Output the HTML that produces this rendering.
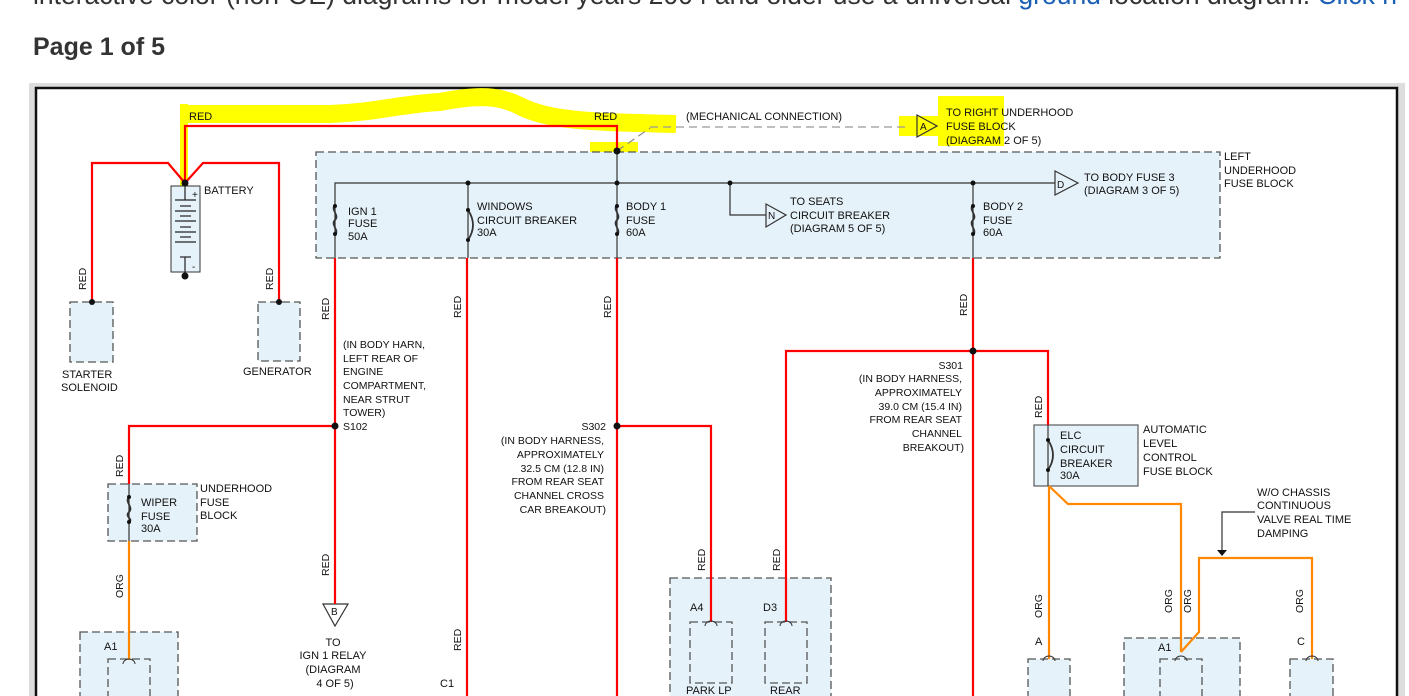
<!DOCTYPE html>
<html><head><meta charset="utf-8"><style>
html,body{margin:0;padding:0;background:#fff;width:1409px;height:696px;overflow:hidden;font-family:"Liberation Sans",sans-serif}
#top{position:absolute;left:33px;top:-20px;font-size:26.5px;color:#333;white-space:nowrap}
#top span{color:#1a5fb4}
#h{position:absolute;left:33px;top:33px;font-size:25px;font-weight:bold;color:#333}
svg{position:absolute;left:0;top:0}
</style></head><body>
<div id="top">interactive color (non-OE) diagrams for model years 2004 and older use a universal <span>ground</span> location diagram. <span>Click h</span></div>
<div id="h">Page 1 of 5</div>
<svg width="1409" height="696" font-family="Liberation Sans, sans-serif" font-size="11" fill="#111">
<rect x="29" y="83" width="1376" height="620" fill="#ddd"/>
<rect x="36" y="88" width="1361" height="620" fill="#fff" stroke="#111" stroke-width="2.5"/>
<!-- yellow highlights -->
<path d="M184 104 L184 200" stroke="#ffff00" stroke-width="8" fill="none"/>
<path d="M180 114 L330 114 C380 112 400 104 440 102 C480 94 500 96 520 106 C550 122 600 122 676 124" stroke="#ffff00" stroke-width="18" fill="none"/>
<rect x="590" y="142" width="48" height="22" fill="#ffff00"/>
<rect x="899" y="116" width="40" height="20" fill="#ffff00"/>
<rect x="938" y="96" width="66" height="50" fill="#ffff00"/>
<!-- fuse blocks -->
<g fill="#e6f2fa" stroke="#555" stroke-dasharray="8,4" stroke-width="1.3">
<rect x="316" y="152" width="904" height="106"/>
<rect x="70" y="302" width="43" height="60"/>
<rect x="258" y="302" width="42" height="59"/>
<rect x="108" y="484" width="89" height="57"/>
<rect x="80" y="632" width="98" height="80"/>
<rect x="108" y="659" width="42" height="50"/>
<rect x="670" y="578" width="161" height="130"/>
<rect x="690" y="622" width="42" height="61"/>
<rect x="765" y="622" width="42" height="61"/>
<rect x="1028" y="659" width="42" height="50"/>
<rect x="1124" y="638" width="116" height="70"/>
<rect x="1160" y="659" width="42" height="50"/>
<rect x="1290" y="659" width="43" height="50"/>
</g>
<rect x="1034" y="425" width="104" height="61" fill="#e6f2fa" stroke="#666" stroke-width="1.3"/>
<rect x="171" y="186" width="29" height="86" fill="#e6f2fa" stroke="#333"/>
<g stroke="#222" stroke-width="1.2">
<line x1="175" y1="200" x2="196" y2="200"/><line x1="180" y1="206" x2="191" y2="206"/>
<line x1="175" y1="211" x2="196" y2="211"/><line x1="180" y1="216" x2="191" y2="216"/>
<line x1="175" y1="221" x2="196" y2="221"/><line x1="180" y1="227" x2="191" y2="227"/>
<line x1="175" y1="232" x2="196" y2="232"/><line x1="180" y1="237" x2="191" y2="237"/>
<line x1="175" y1="242" x2="196" y2="242"/><line x1="180" y1="257" x2="191" y2="257"/>
<line x1="185" y1="257" x2="185" y2="276"/><line x1="185" y1="183" x2="185" y2="200"/>
</g>
<text x="192" y="198" font-size="10">+</text><text x="192" y="270" font-size="10">-</text>
<!-- dark wires in block -->
<g stroke="#333" stroke-width="1.2" fill="none">
<path d="M335 258 L335 183 L1065 183"/>
<path d="M617 151 L617 258"/><path d="M468 183 L468 258"/><path d="M973 183 L973 258"/>
<path d="M730 183 L730 215 L766 215"/>
<path d="M1048 425 L1048 486"/><path d="M129 484 L129 541"/>
<path d="M617 151 L650 128" stroke-dasharray="8,5" stroke="#888"/>
<path d="M650 127 L905 127" stroke-dasharray="8,5" stroke="#999"/>
<path d="M1255 512 L1222 512 L1222 550"/>
</g>
<g stroke="#333" stroke-width="1.8" fill="none">
<path d="M335 205 C330 210 340 215 335 220 C330 225 340 230 335 235"/>
<path d="M617 205 C612 210 622 215 617 220 C612 225 622 230 617 235"/>
<path d="M973 205 C968 210 978 215 973 220 C968 225 978 230 973 235"/>
<path d="M129 497 C124 502 134 507 129 512 C124 517 134 519 129 522"/>
<path d="M468 210 Q478 225 468 240"/><path d="M1048 440 Q1058 455 1048 470"/>
</g>
<g fill="#111"><circle cx="335" cy="206" r="2"/><circle cx="335" cy="234" r="2"/><circle cx="617" cy="206" r="2"/><circle cx="617" cy="234" r="2"/><circle cx="973" cy="206" r="2"/><circle cx="973" cy="234" r="2"/><circle cx="468" cy="210" r="2"/><circle cx="468" cy="240" r="2"/><circle cx="1048" cy="440" r="2"/><circle cx="1048" cy="470" r="2"/><circle cx="129" cy="497" r="2"/><circle cx="129" cy="522" r="2"/></g>
<path d="M1217 550 L1227 550 L1222 556 Z" fill="#111"/>
<g fill="#fff" stroke="#333" stroke-width="1.2">
<path d="M917 115 L937 126 L917 137 Z" fill="#ffff00"/>
<path d="M1055 171 L1078 183 L1055 195 Z" fill="#e6f2fa"/>
<path d="M766 204 L786 215 L766 227 Z" fill="#e6f2fa"/>
<path d="M323 604 L348 604 L335 626 Z"/>
</g>
<g font-size="10"><text x="920" y="130">A</text><text x="1057" y="188">D</text><text x="768" y="219">N</text><text x="331" y="615">B</text></g>
<!-- red wires -->
<g stroke="#f00" stroke-width="2.2" fill="none">
<path d="M185 183 L185 126 L617 126 L617 151"/>
<path d="M185 183 L168 163 L92 163 L92 302"/>
<path d="M185 183 L203 163 L279 163 L279 302"/>
<path d="M335 258 L335 604"/><path d="M467 258 L467 700"/><path d="M617 258 L617 700"/><path d="M973 258 L973 700"/>
<path d="M335 426 L129 426 L129 484"/>
<path d="M617 426 L711 426 L711 622"/>
<path d="M973 351 L786 351 L786 622"/>
<path d="M973 351 L1048 351 L1048 425"/>
</g>
<g stroke="#f80" stroke-width="2.2" fill="none">
<path d="M129 541 L129 660"/>
<path d="M1049 486 L1049 659"/>
<path d="M1049 486 L1068 504 L1181 504 L1181 652"/>
<path d="M1181 652 L1199 632 L1199 558 L1312 558 L1312 659"/>
</g>
<g fill="#111">
<circle cx="617" cy="151" r="3.5"/><circle cx="185" cy="183" r="3.5"/><circle cx="185" cy="276" r="3.5"/>
<circle cx="468" cy="183" r="2.5"/><circle cx="617" cy="183" r="2.5"/><circle cx="730" cy="183" r="2.5"/><circle cx="973" cy="183" r="2.5"/>
<circle cx="335" cy="426" r="3.5"/><circle cx="617" cy="426" r="3.5"/><circle cx="973" cy="351" r="3.5"/>
<circle cx="92" cy="302" r="3"/><circle cx="279" cy="302" r="3"/>
</g>
<!-- text -->
<text x="189" y="120">RED</text><text x="594" y="120">RED</text>
<text x="686" y="120">(MECHANICAL CONNECTION)</text>
<text x="946" y="116">TO RIGHT UNDERHOOD</text><text x="946" y="130">FUSE BLOCK</text><text x="946" y="144">(DIAGRAM 2 OF 5)</text>
<text x="204" y="194">BATTERY</text>
<text x="1224" y="160">LEFT</text><text x="1224" y="174">UNDERHOOD</text><text x="1224" y="187">FUSE BLOCK</text>
<text x="1084" y="181">TO BODY FUSE 3</text><text x="1084" y="194">(DIAGRAM 3 OF 5)</text>
<text x="348" y="215">IGN 1</text><text x="348" y="227">FUSE</text><text x="348" y="240">50A</text>
<text x="477" y="210">WINDOWS</text><text x="477" y="224">CIRCUIT BREAKER</text><text x="477" y="236">30A</text>
<text x="626" y="210">BODY 1</text><text x="626" y="224">FUSE</text><text x="626" y="236">60A</text>
<text x="790" y="205">TO SEATS</text><text x="790" y="219">CIRCUIT BREAKER</text><text x="790" y="232">(DIAGRAM 5 OF 5)</text>
<text x="983" y="210">BODY 2</text><text x="983" y="224">FUSE</text><text x="983" y="236">60A</text>
<text x="62" y="378">STARTER</text><text x="61" y="391">SOLENOID</text><text x="243" y="375">GENERATOR</text>
<g font-size="10.5">
<text x="343" y="348">(IN BODY HARN,</text><text x="343" y="362">LEFT REAR OF</text><text x="343" y="375">ENGINE</text><text x="343" y="389">COMPARTMENT,</text><text x="343" y="403">NEAR STRUT</text><text x="343" y="416">TOWER)</text>
<text x="343" y="430">S102</text>
<g text-anchor="end"><text x="606" y="430">S302</text><text x="604" y="444">(IN BODY HARNESS,</text><text x="604" y="458">APPROXIMATELY</text><text x="604" y="472">32.5 CM (12.8 IN)</text><text x="604" y="485">FROM REAR SEAT</text><text x="604" y="499">CHANNEL CROSS</text><text x="606" y="513">CAR BREAKOUT)</text>
<text x="963" y="369">S301</text><text x="962" y="382">(IN BODY HARNESS,</text><text x="962" y="396">APPROXIMATELY</text><text x="962" y="410">39.0 CM (15.4 IN)</text><text x="962" y="423">FROM REAR SEAT</text><text x="962" y="437">CHANNEL</text><text x="964" y="451">BREAKOUT)</text></g>
</g>
<text x="141" y="506">WIPER</text><text x="141" y="520">FUSE</text><text x="141" y="532">30A</text>
<text x="200" y="492">UNDERHOOD</text><text x="200" y="506">FUSE</text><text x="200" y="519">BLOCK</text>
<text x="1060" y="439">ELC</text><text x="1060" y="453">CIRCUIT</text><text x="1060" y="467">BREAKER</text><text x="1060" y="479">30A</text>
<text x="1143" y="433">AUTOMATIC</text><text x="1143" y="447">LEVEL</text><text x="1143" y="461">CONTROL</text><text x="1143" y="475">FUSE BLOCK</text>
<text x="1257" y="496">W/O CHASSIS</text><text x="1257" y="509">CONTINUOUS</text><text x="1257" y="523">VALVE REAL TIME</text><text x="1257" y="537">DAMPING</text>
<g text-anchor="middle"><text x="333" y="646">TO</text><text x="333" y="659">IGN 1 RELAY</text><text x="333" y="673">(DIAGRAM</text><text x="335" y="687">4 OF 5)</text></g>
<text x="104" y="650">A1</text><text x="440" y="687">C1</text><text x="690" y="611">A4</text><text x="763" y="611">D3</text>
<text x="686" y="694">PARK LP</text><text x="770" y="694">REAR</text>
<text x="1035" y="645">A</text><text x="1158" y="651">A1</text><text x="1297" y="645">C</text>
<!-- rotated labels -->
<g font-size="10.5">
<text transform="translate(86,290) rotate(-90)">RED</text>
<text transform="translate(273,290) rotate(-90)">RED</text>
<text transform="translate(329,320) rotate(-90)">RED</text>
<text transform="translate(461,318) rotate(-90)">RED</text>
<text transform="translate(611,318) rotate(-90)">RED</text>
<text transform="translate(967,316) rotate(-90)">RED</text>
<text transform="translate(123,477) rotate(-90)">RED</text>
<text transform="translate(329,576) rotate(-90)">RED</text>
<text transform="translate(461,651) rotate(-90)">RED</text>
<text transform="translate(123,598) rotate(-90)">ORG</text>
<text transform="translate(705,571) rotate(-90)">RED</text>
<text transform="translate(780,571) rotate(-90)">RED</text>
<text transform="translate(1042,418) rotate(-90)">RED</text>
<text transform="translate(1042,618) rotate(-90)">ORG</text>
<text transform="translate(1172,613) rotate(-90)">ORG</text>
<text transform="translate(1191,613) rotate(-90)">ORG</text>
<text transform="translate(1303,613) rotate(-90)">ORG</text>
</g>
<g fill="none" stroke="#333">
<path d="M123 664 A6 5 0 0 1 135 664"/><path d="M705 626 A6 5 0 0 1 717 626"/><path d="M780 626 A6 5 0 0 1 792 626"/>
<path d="M1043 661 A6 5 0 0 1 1055 661"/><path d="M1175 661 A6 5 0 0 1 1187 661"/><path d="M1306 661 A6 5 0 0 1 1318 661"/>
</g>
</svg>
</body></html>
